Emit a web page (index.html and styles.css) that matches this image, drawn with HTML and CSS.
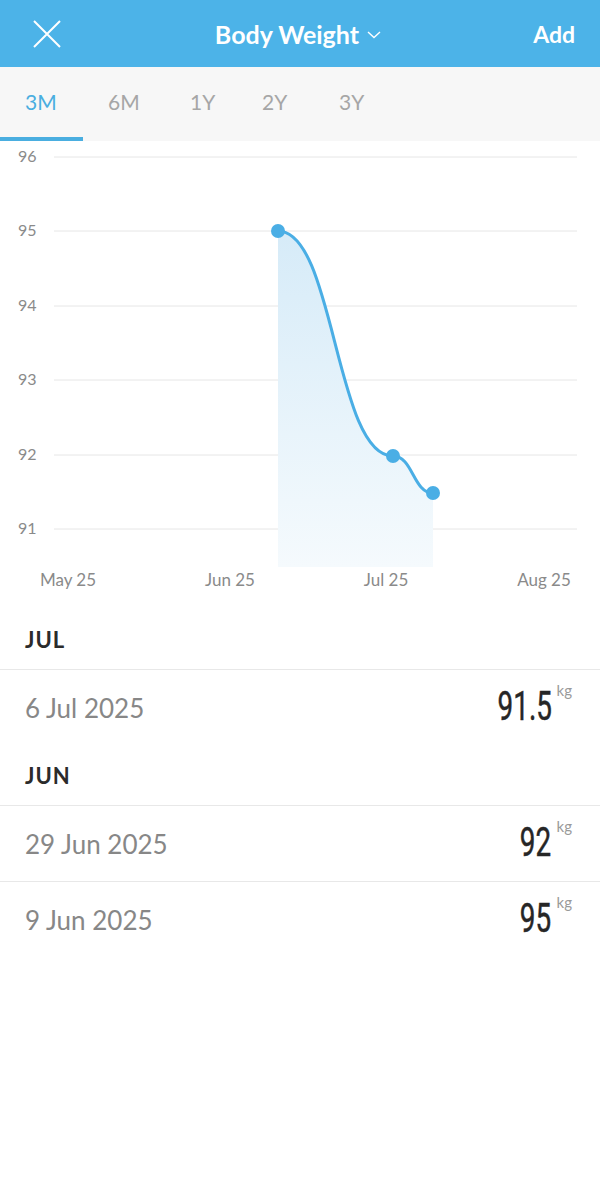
FILE: index.html
```html
<!doctype html>
<html lang="en">
<head>
  <meta charset="UTF-8">
  <title>Body Weight</title>
  <link rel="stylesheet" href="styles.css">
</head>
<body>
  <div class="topbar">
    <div class="topbar-left">
      <svg class="close-icon" width="30" height="30" viewBox="0 0 30 30">
        <path d="M2 2 L28 28 M28 2 L2 28" stroke="#fff" stroke-width="2" fill="none"/>
      </svg>
    </div>
    <div class="topbar-title">
      Body Weight
      <svg class="chevron" width="14" height="8" viewBox="0 0 14 8">
        <path d="M1 1 L7 6.5 L13 1" stroke="#fff" stroke-width="1.4" fill="none"/>
      </svg>
    </div>
    <div class="topbar-right">Add</div>
  </div>

  <div class="tabs">
    <span class="tab active">3M</span>
    <span class="tab">6M</span>
    <span class="tab">1Y</span>
    <span class="tab">2Y</span>
    <span class="tab">3Y</span>
  </div>

  <svg class="chart" width="600" height="468" viewBox="0 0 600 468">
    <defs>
      <linearGradient id="fade" x1="0" y1="0" x2="0" y2="1">
        <stop offset="0" stop-color="#d6ebf8"/>
        <stop offset="1" stop-color="#f5fafd"/>
      </linearGradient>
    </defs>
    <g class="grid">
      <line x1="54" y1="16" x2="577" y2="16"/>
      <line x1="54" y1="90" x2="577" y2="90"/>
      <line x1="54" y1="165" x2="577" y2="165"/>
      <line x1="54" y1="239" x2="577" y2="239"/>
      <line x1="54" y1="314" x2="577" y2="314"/>
      <line x1="54" y1="388" x2="577" y2="388"/>
    </g>
    <g class="ylabels">
      <text x="18" y="21">96</text>
      <text x="18" y="95">95</text>
      <text x="18" y="170">94</text>
      <text x="18" y="244">93</text>
      <text x="18" y="319">92</text>
      <text x="18" y="393">91</text>
    </g>
    <path d="M278 90 C335 90 335 315 393 315 C413 315 413 352 433 352 L433 426 L278 426 Z" fill="url(#fade)"/>
    <path d="M278 90 C335 90 335 315 393 315 C413 315 413 352 433 352" stroke="#4aaee5" stroke-width="3" fill="none"/>
    <g fill="#4aaee5">
      <circle cx="278" cy="90" r="7"/>
      <circle cx="393" cy="315" r="7"/>
      <circle cx="433" cy="352" r="7"/>
    </g>
    <g class="xlabels">
      <text x="68" y="445">May 25</text>
      <text x="230" y="445">Jun 25</text>
      <text x="386" y="445">Jul 25</text>
      <text x="544" y="445">Aug 25</text>
    </g>
  </svg>

  <div class="log">
    <div class="month">JUL</div>
    <div class="entry">
      <span class="date">6 Jul 2025</span>
      <span class="value"><span class="num">91.5</span><span class="unit">kg</span></span>
    </div>
    <div class="month">JUN</div>
    <div class="entry">
      <span class="date">29 Jun 2025</span>
      <span class="value"><span class="num">92</span><span class="unit">kg</span></span>
    </div>
    <div class="entry">
      <span class="date">9 Jun 2025</span>
      <span class="value"><span class="num">95</span><span class="unit">kg</span></span>
    </div>
  </div>
</body>
</html>
```
FILE: styles.css
```css
body {
  margin: 0;
  padding: 0;
  background: #ffffff;
  font-family: Lato, "Open Sans", sans-serif;
}

.topbar {
  height: 67px;
  background-color: #4cb3e8;
  display: flex;
  align-items: center;
  color: #ffffff;
}

.topbar-left {
  width: 110px;
  padding-left: 32px;
  box-sizing: border-box;
  display: flex;
  align-items: center;
}

.topbar-title {
  flex: 1;
  text-align: center;
  font-size: 25px;
  font-weight: bold;
  padding-right: 4px;
}

.chevron {
  vertical-align: 5px;
  margin-left: 2px;
}

.topbar-right {
  width: 110px;
  padding-right: 25px;
  box-sizing: border-box;
  text-align: right;
  font-size: 23px;
  font-weight: bold;
}

.tabs {
  height: 74px;
  background-color: #f7f7f7;
  display: flex;
}

.tab {
  width: 83px;
  box-sizing: border-box;
  padding-left: 25px;
  padding-top: 22px;
  font-size: 21px;
  color: #a6a6a6;
  border-bottom: 4px solid transparent;
}

.tab:nth-child(3) { width: 72px; padding-left: 24px; }
.tab:nth-child(4) { width: 76px; padding-left: 24px; }

.tab.active {
  color: #4aaee0;
  border-bottom-color: #4aaee0;
}

.chart {
  display: block;
}

.grid line {
  stroke: #e6e6e6;
  stroke-width: 1;
}

.ylabels text {
  font-family: Lato, sans-serif;
  font-size: 16px;
  fill: #8a8a8a;
}

.xlabels text {
  font-family: Lato, sans-serif;
  font-size: 17px;
  fill: #8a8a8a;
  text-anchor: middle;
}

.month {
  height: 60px;
  display: flex;
  align-items: center;
  padding-left: 25px;
  font-size: 22px;
  font-weight: bold;
  color: #2b2b2b;
  letter-spacing: 1px;
}

.entry {
  height: 75px;
  border-top: 1px solid #e8e8e8;
  display: flex;
  align-items: center;
  justify-content: space-between;
  padding: 0 28px 0 25px;
}

.date {
  font-size: 26px;
  color: #878787;
}

.value {
  display: flex;
  align-items: flex-start;
}

.num {
  display: inline-block;
  font-family: Roboto, sans-serif;
  font-size: 41px;
  color: #262626;
  -webkit-text-stroke: 0.5px #262626;
  transform: scaleX(0.68);
  transform-origin: right center;
  margin-top: -3px;
}

.unit {
  font-size: 15px;
  color: #9a9a9a;
  margin-left: 5px;
  margin-top: -4px;
}
```
